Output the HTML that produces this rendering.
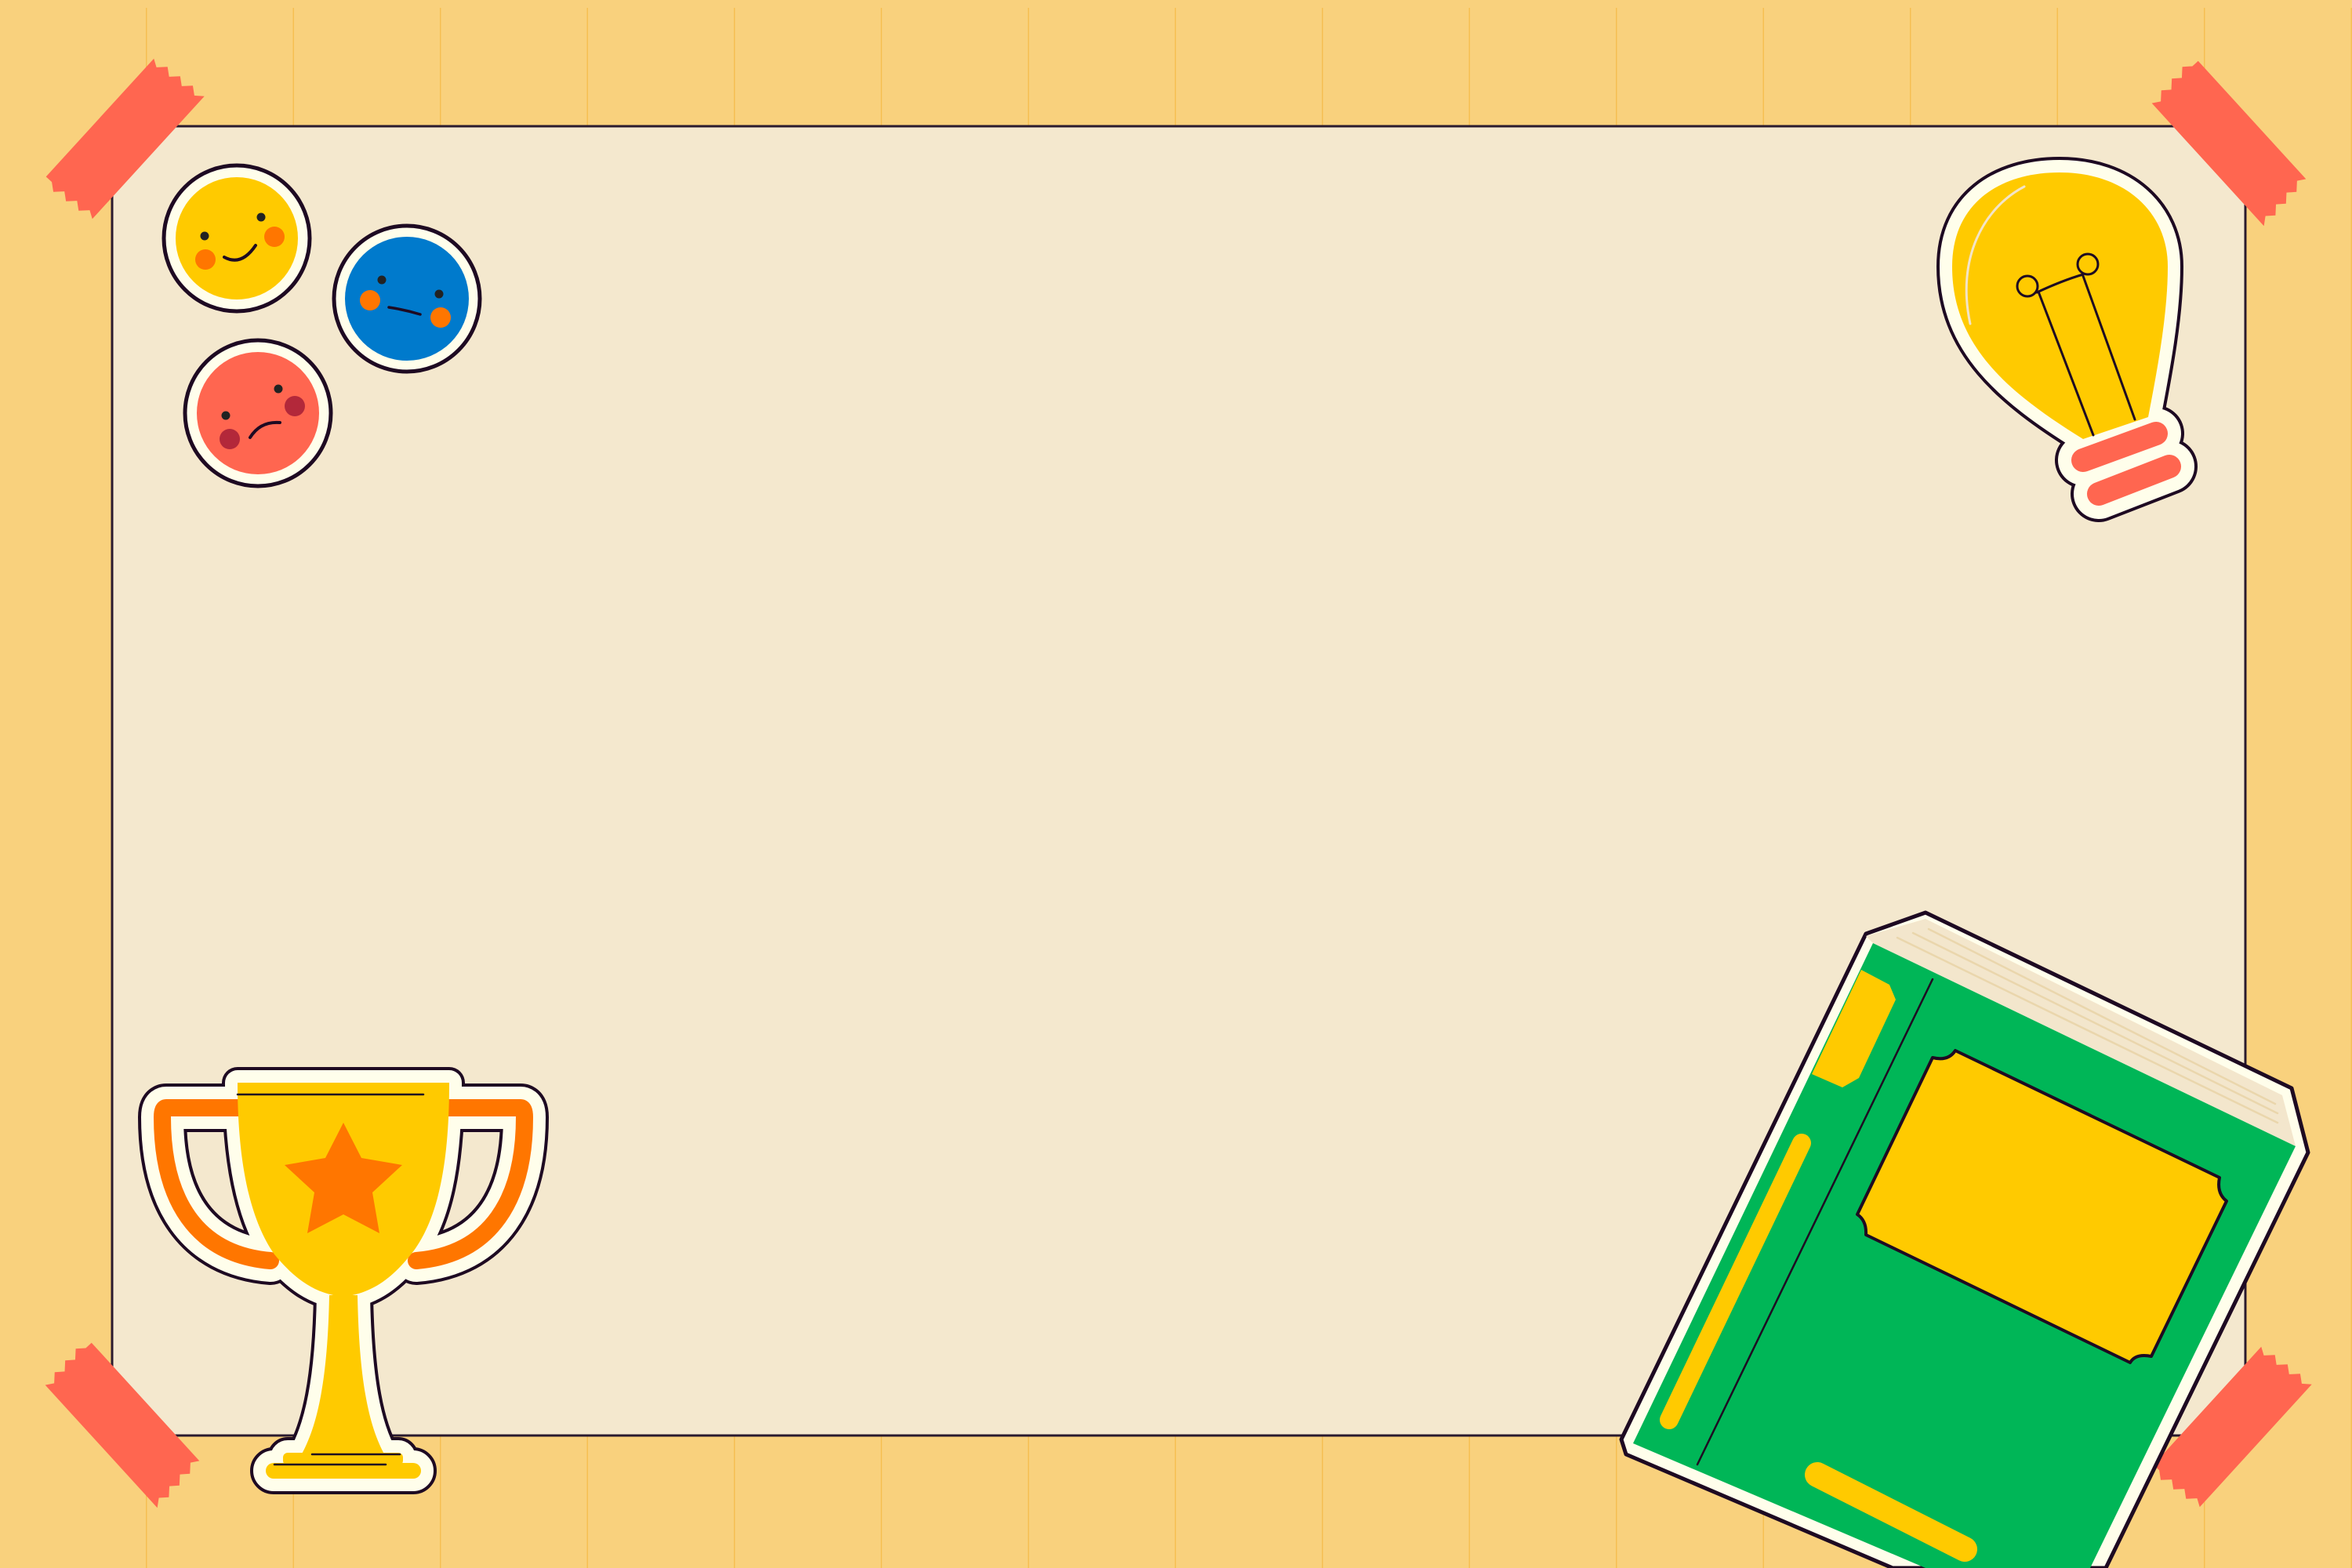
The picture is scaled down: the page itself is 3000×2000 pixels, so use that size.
<!DOCTYPE html>
<html><head><meta charset="utf-8"><style>
html,body{margin:0;padding:0;width:3000px;height:2000px;overflow:hidden;background:#F9D17D;}
svg{display:block}
</style></head><body>
<svg width="3000" height="2000" viewBox="0 0 3000 2000" xmlns="http://www.w3.org/2000/svg">
<defs>
<pattern id="stripes" x="0" y="0" width="187.5" height="2000" patternUnits="userSpaceOnUse">
<rect x="186" y="0" width="1.6" height="2000" fill="#F6BF52"/>
</pattern>
<g id="tape"><path fill="#FF6650" d="M-102,-40 L102,-40 L96,-30 L106,-20 L98,-10 L108,0 L100,10 L110,20 L102,30 L110,40 L-102,40 L-96,30 L-106,20 L-98,10 L-108,0 L-100,-10 L-110,-20 L-102,-30 Z"/></g>
</defs>
<rect width="3000" height="2000" fill="#F9D17D"/>
<rect x="0" y="10" width="3000" height="1990" fill="url(#stripes)"/>
<!-- paper -->
<rect x="143" y="161" width="2721" height="1670" fill="#F4E8CE" stroke="#2A1A2E" stroke-width="3"/>
<!-- tapes -->
<use href="#tape" transform="translate(157,177) rotate(-47.6)"/>
<use href="#tape" transform="translate(2843,180) rotate(47.6)"/>
<use href="#tape" transform="translate(156,1815) rotate(47.6)"/>
<use href="#tape" transform="translate(2845,1820) rotate(-47.6)"/>

<!-- smileys -->
<g>
<circle cx="302" cy="304" r="93" fill="#FFFEEB" stroke="#1E0A22" stroke-width="5"/>
<circle cx="302" cy="304" r="78" fill="#FFCA00"/>
<circle cx="261" cy="301" r="5.5" fill="#222"/><circle cx="333" cy="277" r="5.5" fill="#222"/>
<circle cx="262" cy="331" r="13" fill="#FF7600"/><circle cx="350" cy="302" r="13" fill="#FF7600"/>
<path d="M286,328 Q308,340 326,313" fill="none" stroke="#1E0A22" stroke-width="4" stroke-linecap="round"/>

<circle cx="519" cy="381" r="93" fill="#FFFEEB" stroke="#1E0A22" stroke-width="5"/>
<circle cx="519" cy="381" r="79" fill="#007ACC"/>
<circle cx="487" cy="357" r="5.5" fill="#222"/><circle cx="560" cy="375" r="5.5" fill="#222"/>
<circle cx="472" cy="383" r="13" fill="#FF7600"/><circle cx="562" cy="405" r="13" fill="#FF7600"/>
<path d="M496,392 Q516,395 536,401" fill="none" stroke="#1E0A22" stroke-width="3.5" stroke-linecap="round"/>

<circle cx="329" cy="527" r="93" fill="#FFFEEB" stroke="#1E0A22" stroke-width="5"/>
<circle cx="329" cy="527" r="78" fill="#FF6650"/>
<circle cx="288" cy="530" r="5.5" fill="#222"/><circle cx="355" cy="496" r="5.5" fill="#222"/>
<circle cx="293" cy="560" r="13" fill="#B3283A"/><circle cx="376" cy="518" r="13" fill="#B3283A"/>
<path d="M319,558 Q332,537 357,539" fill="none" stroke="#1E0A22" stroke-width="4" stroke-linecap="round"/>
</g>

<!-- lightbulb -->
<g stroke-linejoin="round" stroke-linecap="round">
<g stroke="#1E0A22" stroke-width="40" fill="#1E0A22">
<path d="M2657,560 C2560,500 2490,440 2490,340 C2490,260 2550,220 2627,220 C2710,220 2765,270 2765,340 C2765,400 2752,470 2740,532 Z"/>
<line x1="2657" y1="587" x2="2750" y2="553" stroke-width="72"/>
<line x1="2677" y1="630" x2="2767" y2="595" stroke-width="72"/>
</g>
<g stroke="#FFFEEB" stroke-width="32" fill="#FFFEEB">
<path d="M2657,560 C2560,500 2490,440 2490,340 C2490,260 2550,220 2627,220 C2710,220 2765,270 2765,340 C2765,400 2752,470 2740,532 Z"/>
<line x1="2657" y1="587" x2="2750" y2="553" stroke-width="64"/>
<line x1="2677" y1="630" x2="2767" y2="595" stroke-width="64"/>
</g>
<path fill="#FFCA00" d="M2657,560 C2560,500 2490,440 2490,340 C2490,260 2550,220 2627,220 C2710,220 2765,270 2765,340 C2765,400 2752,470 2740,532 Z"/>
<path d="M2582,238 C2530,265 2495,330 2513,413" fill="none" stroke="#F3E4C8" stroke-width="3"/>
<line x1="2657" y1="587" x2="2750" y2="553" stroke="#FF6650" stroke-width="30"/>
<line x1="2677" y1="630" x2="2767" y2="595" stroke="#FF6650" stroke-width="30"/>
<g fill="none" stroke="#1E0A22" stroke-width="3">
<circle cx="2586" cy="365" r="13"/><circle cx="2663" cy="337" r="13"/>
<path d="M2598,373 Q2630,358 2657,350"/>
<line x1="2600" y1="372" x2="2670" y2="555"/>
<line x1="2657" y1="352" x2="2723" y2="535"/>
</g>
</g>

<!-- trophy -->
<g stroke-linejoin="round" stroke-linecap="round">
<g stroke="#1E0A22" fill="#1E0A22">
<path stroke-width="40" d="M303,1381 L573,1381 C573,1480 560,1560 520,1605 C495,1635 470,1650 438,1654 C400,1650 375,1630 350,1600 C315,1550 303,1470 303,1381 Z"/>
<path stroke-width="40" d="M420,1652 L456,1652 C458,1760 470,1820 492,1858 L383,1858 C405,1820 418,1760 420,1652 Z"/>
<rect stroke-width="40" x="361" y="1853" width="153" height="16" rx="6"/>
<rect stroke-width="40" x="339" y="1866" width="198" height="20" rx="10"/>
<path fill="none" stroke-width="62" d="M310,1413 L212,1413 Q207,1413 207,1425 C207,1530 250,1600 345,1608"/>
<path fill="none" stroke-width="62" d="M566,1413 L664,1413 Q669,1413 669,1425 C669,1530 626,1600 531,1608"/>
</g>
<g stroke="#FFFEEB" fill="#FFFEEB">
<path stroke-width="32" d="M303,1381 L573,1381 C573,1480 560,1560 520,1605 C495,1635 470,1650 438,1654 C400,1650 375,1630 350,1600 C315,1550 303,1470 303,1381 Z"/>
<path stroke-width="32" d="M420,1652 L456,1652 C458,1760 470,1820 492,1858 L383,1858 C405,1820 418,1760 420,1652 Z"/>
<rect stroke-width="32" x="361" y="1853" width="153" height="16" rx="6"/>
<rect stroke-width="32" x="339" y="1866" width="198" height="20" rx="10"/>
<path fill="none" stroke-width="54" d="M310,1413 L212,1413 Q207,1413 207,1425 C207,1530 250,1600 345,1608"/>
<path fill="none" stroke-width="54" d="M566,1413 L664,1413 Q669,1413 669,1425 C669,1530 626,1600 531,1608"/>
</g>
<path fill="none" stroke="#FF7600" stroke-width="22" d="M310,1413 L212,1413 Q207,1413 207,1425 C207,1530 250,1600 345,1608"/>
<path fill="none" stroke="#FF7600" stroke-width="22" d="M566,1413 L664,1413 Q669,1413 669,1425 C669,1530 626,1600 531,1608"/>
<path fill="#FFCA00" d="M303,1381 L573,1381 C573,1480 560,1560 520,1605 C495,1635 470,1650 438,1654 C400,1650 375,1630 350,1600 C315,1550 303,1470 303,1381 Z"/>
<path fill="#FFCA00" d="M420,1652 L456,1652 C458,1760 470,1820 492,1858 L383,1858 C405,1820 418,1760 420,1652 Z"/>
<rect fill="#FFCA00" x="361" y="1853" width="153" height="16" rx="6"/>
<rect fill="#FFCA00" x="339" y="1866" width="198" height="20" rx="10"/>
<path d="M303,1396 L540,1396" stroke="#1E0A22" stroke-width="2.5"/>
<polygon fill="#FF7600" points="438,1432 461,1477 513,1486 475,1521 484,1573 438,1549 392,1573 401,1521 363,1486 415,1477"/>
<path d="M398,1855 L510,1855 M350,1868 L492,1868" stroke="#1E0A22" stroke-width="2.5"/>
</g>

<!-- book -->
<g stroke-linejoin="round" stroke-linecap="round">
<polygon points="2456,1164 2380,1191 2068,1836 2074,1855 2414,2000 2686,2000 2944,1470 2923,1388" fill="#FFFEEB" stroke="#1E0A22" stroke-width="5"/>
<polygon points="2380,1194 2456,1172 2911,1397 2928,1462 2389,1203" fill="#F3E6CC"/>
<g stroke="#EAD6AC" stroke-width="2.5">
<line x1="2420" y1="1196" x2="2905" y2="1432"/>
<line x1="2440" y1="1190" x2="2905" y2="1420"/>
<line x1="2460" y1="1185" x2="2902" y2="1408"/>
</g>
<polygon points="2389,1203 2928,1462 2666,2000 2456,2000 2083,1841" fill="#00B657"/>
<polygon points="2374,1237 2410,1256 2418,1275 2371,1375 2350,1387 2311,1370" fill="#FFCA00"/>
<line x1="2298" y1="1458" x2="2129" y2="1811" stroke="#FFCA00" stroke-width="24"/>
<line x1="2318" y1="1881" x2="2506" y2="1976" stroke="#FFCA00" stroke-width="32"/>
<line x1="2465" y1="1249" x2="2165" y2="1868" stroke="#1E0A22" stroke-width="2.5"/>
<path d="M2465,1349 Q2485,1354 2494,1340 L2831,1502 Q2827,1522 2840,1532 L2744,1730 Q2724,1726 2717,1738 L2380,1575 Q2381,1557 2369,1549 Z" fill="#FFCA00" stroke="#1E0A22" stroke-width="4"/>
</g>
</svg>
</body></html>
